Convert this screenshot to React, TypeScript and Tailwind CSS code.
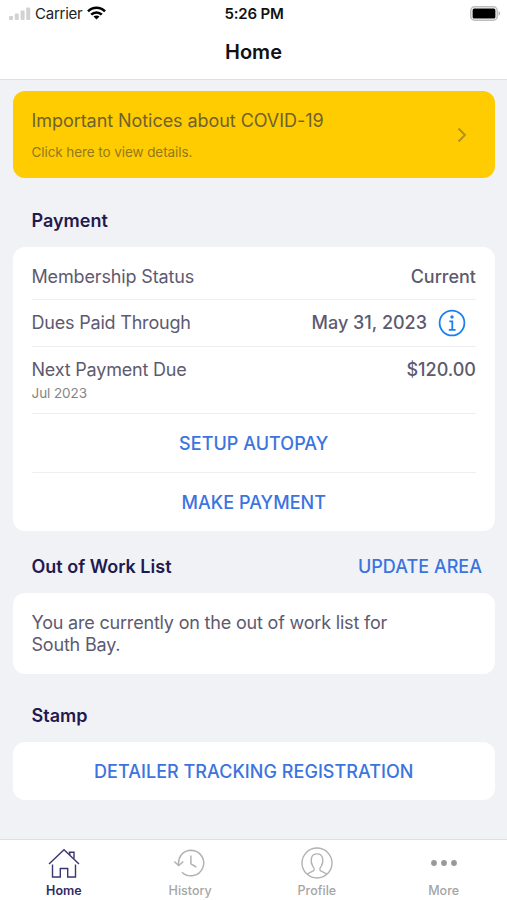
import type { ReactNode } from 'react';

interface TabItem {
    label: string;
    icon: ReactNode;
    active?: boolean;
}

function StatusBar() {
    return (
        <div className="grid grid-cols-3 items-center h-[27px] pl-[9px] pr-[6px]">
            <div className="flex items-center">
                <svg width="22" height="14" viewBox="0 0 22 14" fill="#d2d2d2">
                    <rect x="0" y="9" width="4" height="4" rx="1" />
                    <rect x="5.8" y="6.6" width="4" height="6.4" rx="1" />
                    <rect x="11.6" y="3.6" width="4" height="9.4" rx="1" />
                    <rect x="17.2" y="0.6" width="4" height="12.4" rx="1" />
                </svg>
                <span className="ml-[4px] text-[15px] tracking-[-0.25px] text-[#222]">Carrier</span>
                <svg className="ml-[5px] mb-[1px]" width="19" height="14" viewBox="0 0 19 14" fill="none" stroke="#000" strokeWidth="2.6">
                    <path d="M1 5.3C5.8.5 13.2.5 18 5.3" />
                    <path d="M4.2 8.7c3-3 7.6-3 10.6 0" />
                    <path d="M9.5 13.6 6.5 10.6c1.7-1.6 4.3-1.6 6 0z" fill="#000" stroke="none" />
                </svg>
            </div>
            <span className="pr-[2px] text-center text-[15px] font-semibold tracking-[-0.2px] text-[#111]">5:26 PM</span>
            <svg className="justify-self-end" width="31" height="15" viewBox="0 0 31 15">
                <rect x="0.8" y="0.8" width="26.4" height="13.4" rx="3.8" fill="#fff" stroke="#bcbcbc" strokeWidth="1.5" />
                <rect x="2.6" y="2.6" width="22.8" height="9.8" rx="1.5" fill="#000" />
                <path d="M28.6 5.3c1.9.7 1.9 3.7 0 4.4z" fill="#aaa" />
            </svg>
        </div>
    );
}

function Card({ children }: { children: ReactNode }) {
    return <div className="ml-[13px] mr-[12.5px] rounded-[12px] bg-white px-[18.5px]">{children}</div>;
}

function ActionButton({ label }: { label: string }) {
    return (
        <button className="flex h-[58px] w-full items-center justify-center pt-[2px] text-[18px] font-[550] tracking-[0.04px] text-[#3b74de]">
            {label}
        </button>
    );
}

const tabs: TabItem[] = [
    {
        label: 'Home',
        active: true,
        icon: (
            <svg width="32" height="32" viewBox="0 0 32 32" fill="none" stroke="#3c3670" strokeWidth="1.4">
                <path d="M1 17 16 2.8 31 17" />
                <path d="M20.8 5.2H26v6.6M21.8 5.2V8" />
                <path d="M4.5 17.5V30h7.8v-8.5h7.4V30h7.8V17.5" />
            </svg>
        ),
    },
    {
        label: 'History',
        icon: (
            <svg width="32" height="32" viewBox="0 0 32 32" fill="none" stroke="#b2b2b2" strokeWidth="1.5">
                <path d="M4.7 18.6C3.5 9.7 9.5 3.2 17.2 3.2A12.8 12.8 0 1 1 8 25.2" />
                <path d="m.3 14.5 4.4 4.1 4.6-4.1" />
                <path d="M16.9 8.5v8.3l5.4 3.2" />
            </svg>
        ),
    },
    {
        label: 'Profile',
        icon: (
            <svg width="32" height="32" viewBox="0 0 32 32" fill="none" stroke="#b2b2b2" strokeWidth="1.4">
                <circle cx="16" cy="16" r="15" />
                <path d="M6.3 27.2c1.7-2 6-2.4 6.8-4.3.5-1.500-.5-2.700-1.500-4-2-3.600-2.800-12 4.400-12s6.400 8.400 4.400 12c-1 1.300-2 2.500-1.500 4 .8 1.900 5.100 2.300 6.800 4.300" />
            </svg>
        ),
    },
    {
        label: 'More',
        icon: (
            <svg width="32" height="32" viewBox="0 0 32 32" fill="#999">
                <circle cx="6" cy="16" r="2.9" />
                <circle cx="16" cy="16" r="2.9" />
                <circle cx="26" cy="16" r="2.9" />
            </svg>
        ),
    },
];

export default function App() {
    return (
        <div className="flex h-[900px] w-[507px] flex-col overflow-hidden bg-[#f1f2f6] font-['Inter',sans-serif] text-[18px] leading-[22px] text-[#5d5a70]">
            {/* Header */}
            <header className="h-[80px] shrink-0 border-b-[1.5px] border-[#e0e0e4] bg-white">
                <StatusBar />
                <h1 className="mt-[14px] text-center text-[20px] font-semibold text-[#111]">Home</h1>
            </header>

            <main className="flex-1 pt-[11px]">
                {/* Notice banner */}
                <a className="ml-[13px] mr-[12.5px] flex h-[87px] items-center justify-between rounded-[12px] bg-[#ffcc01] pl-[18.5px] pr-[28px]">
                    <div className="pt-[4px]">
                        <p className="tracking-[-0.06px] text-[#6f622f]">Important Notices about COVID-19</p>
                        <p className="mt-[9px] text-[13.5px] tracking-[-0.08px] text-[#93791f]">Click here to view details.</p>
                    </div>
                    <svg width="10" height="16" viewBox="0 0 10 16" fill="none" stroke="#b5921a" strokeWidth="2">
                        <path d="m1.5 1.5 6.5 6.5-6.5 6.5" />
                    </svg>
                </a>

                {/* Payment */}
                <h2 className="mt-[32px] mb-[15px] pl-[31.5px] font-semibold text-[#1f1a4f]">Payment</h2>
                <Card>
                    <div className="flex h-[53px] items-center justify-between border-b border-[#eeeef0] pt-[7px]">
                        <span className="tracking-[-0.15px]">Membership Status</span>
                        <span className="font-medium">Current</span>
                    </div>
                    <div className="flex h-[47px] items-center justify-between border-b border-[#eeeef0]">
                        <span className="tracking-[-0.2px]">Dues Paid Through</span>
                        <div className="flex items-center pr-[10px]">
                            <span className="font-medium">May 31, 2023</span>
                            <svg className="ml-[11px]" width="28" height="28" viewBox="0 0 28 28" fill="none" stroke="#1e80f0" strokeWidth="1.8">
                                <circle cx="14" cy="14" r="12.4" />
                                <path d="M11.3 12.3h3v8.3M10.8 20.8h6.8" />
                                <circle cx="14" cy="8" r="1.7" fill="#1e80f0" stroke="none" />
                            </svg>
                        </div>
                    </div>
                    <div className="flex h-[67px] justify-between border-b border-[#eeeef0] pt-[12px]">
                        <div>
                            <p className="tracking-[-0.2px]">Next Payment Due</p>
                            <p className="text-[13.5px] leading-[25px] tracking-[-0.08px] text-[#858585]">Jul 2023</p>
                        </div>
                        <span className="font-medium">$120.00</span>
                    </div>
                    <div className="border-b border-[#eeeef0]">
                        <ActionButton label="SETUP AUTOPAY" />
                    </div>
                    <ActionButton label="MAKE PAYMENT" />
                </Card>

                {/* Out of work list */}
                <div className="mt-[25px] mb-[15px] flex justify-between pl-[31.5px] pr-[25px]">
                    <h2 className="font-semibold text-[#1f1a4f]">Out of Work List</h2>
                    <button className="font-[550] tracking-[0.02px] text-[#3b74de]">UPDATE AREA</button>
                </div>
                <Card>
                    <p className="h-[81px] pt-[19px] tracking-[-0.19px]">
                        You are currently on the out of work list for
                        <br />
                        South Bay.
                    </p>
                </Card>

                {/* Stamp */}
                <h2 className="mt-[31px] mb-[15px] pl-[31.5px] font-semibold text-[#1f1a4f]">Stamp</h2>
                <Card>
                    <ActionButton label="DETAILER TRACKING REGISTRATION" />
                </Card>
            </main>

            {/* Tab bar */}
            <nav className="grid h-[61px] shrink-0 grid-cols-4 border-t-[1.5px] border-[#dfdfe3] bg-white pt-[7px]">
                {tabs.map((tab) => (
                    <a
                        key={tab.label}
                        className={`flex flex-col items-center text-[12.5px] ${tab.active ? 'pl-[1px] font-semibold text-[#302a62]' : 'font-medium text-[#a5a5a5]'}`}
                    >
                        {tab.icon}
                        <span className="mt-[1px]">{tab.label}</span>
                    </a>
                ))}
            </nav>
        </div>
    );
}
